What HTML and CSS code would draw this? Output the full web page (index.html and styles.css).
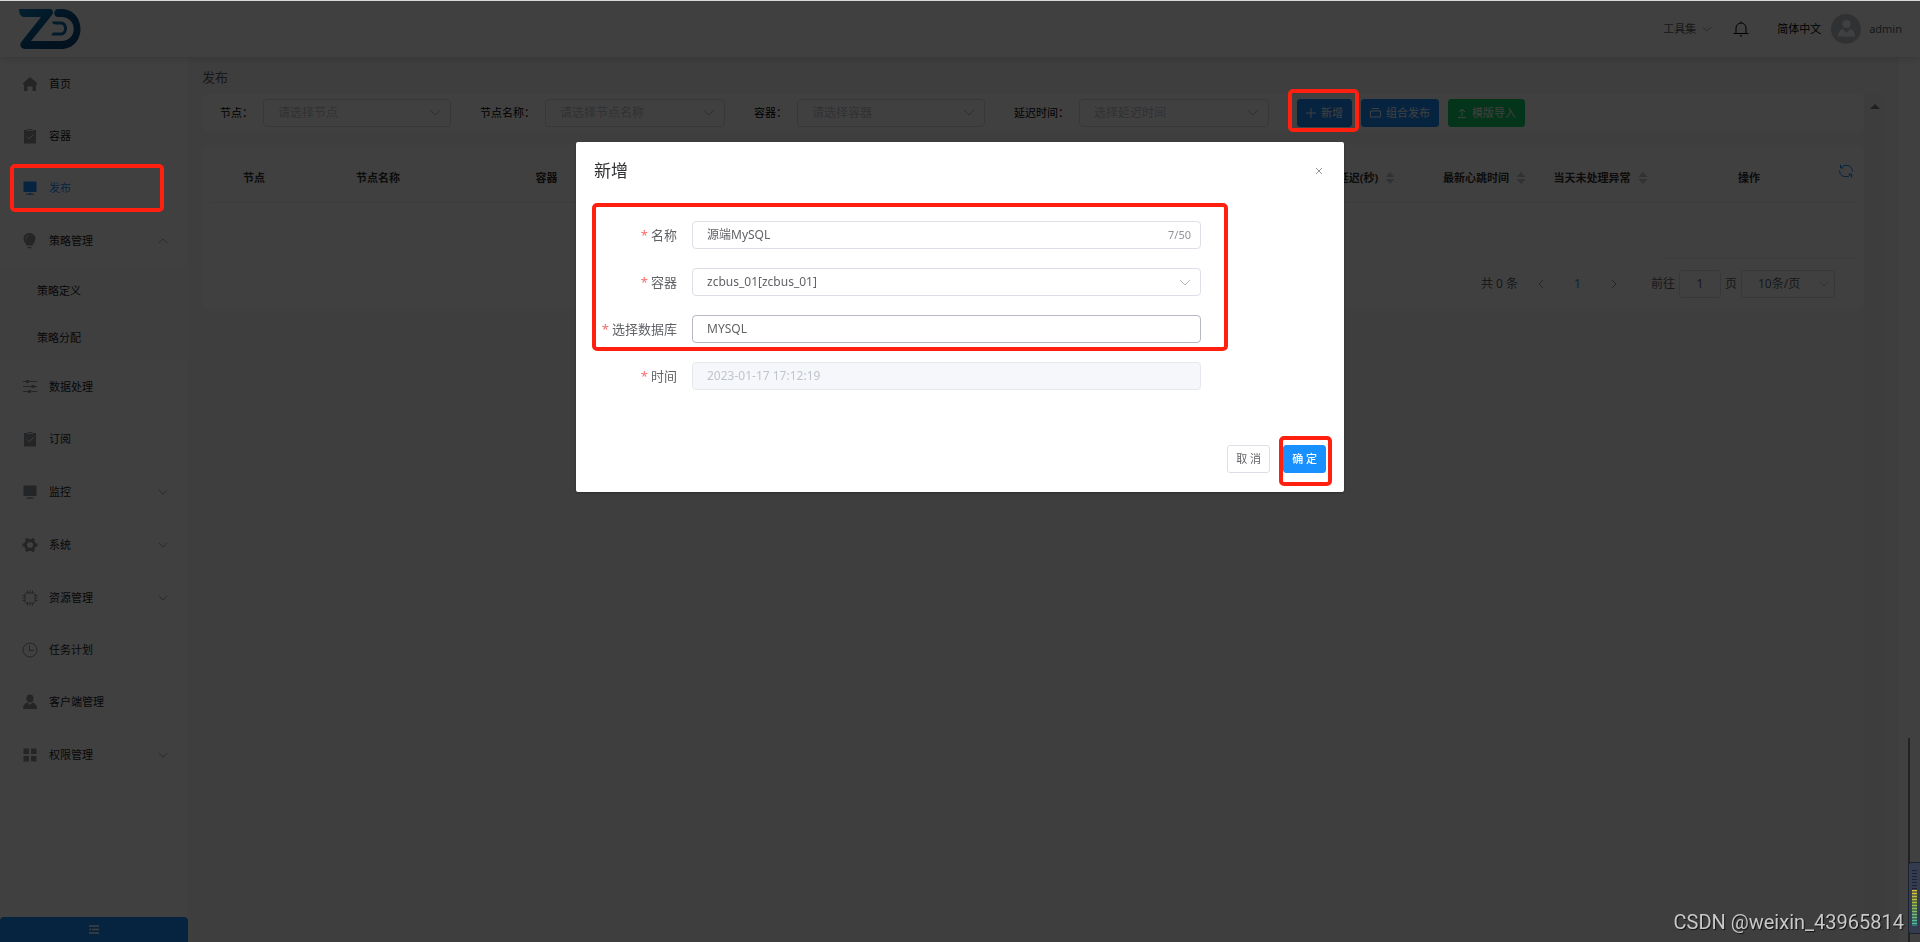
FILE: index.html
```html
<!DOCTYPE html>
<html lang="zh-CN">
<head>
<meta charset="utf-8">
<title>发布</title>
<link rel="stylesheet" href="styles.css">
</head>
<body>
<svg class="defs" aria-hidden="true">
  <symbol id="down" viewBox="0 0 12 7"><path d="M1 1l5 5 5-5" fill="none" stroke="currentColor"/></symbol>
  <symbol id="left" viewBox="0 0 6 10"><path d="M5 1L1 5l4 4" fill="none" stroke="currentColor"/></symbol>
  <symbol id="clip" viewBox="0 0 16 16"><path fill="currentColor" d="M2 2h3v1h6V2h3v13.500H2zM5.500 1h5v1.200h-5z"/><path d="M5 8.500l2.300 2.300L11.500 6.500" fill="none" stroke="#fff"/></symbol>
  <symbol id="screen" viewBox="0 0 16 16"><path fill="currentColor" d="M1.500 1.500h13v10.500h-13zM6.800 13h2.400v.8H12v1H4v-1h2.800z"/></symbol>
  <symbol id="sort" viewBox="0 0 10 12"><path fill="currentColor" d="M5 0l4.500 5h-9zM5 12l4.500-5h-9z"/></symbol>
</svg>

<div class="app">
  <header class="top">
    <a class="logo" href="#" aria-label="ZD">
      <svg viewBox="0 0 62 42" width="62" height="42">
        <defs><linearGradient id="lg" x1="0" y1="0" x2="1" y2="1"><stop offset="0" stop-color="#0d86c4"/><stop offset=".5" stop-color="#08528a"/><stop offset="1" stop-color="#08406e"/></linearGradient></defs>
        <path d="M0 1h31c3 0 4 4 2 6L12 33h30c17 0 17-24 0-24h-3c-5 0-5-8 0-8h3c26 0 26 40 0 40H6c-5 0-6-5-3-8L22 9H5C2 9 0 6 0 1z" fill="url(#lg)"/>
        <path d="M33 13.500h9c4 0 6 3.500 6 7s-2 7-6 7H32.500c0-1.500 1-3 2.500-3h7c2 0 3-2 3-4s-1-4-3-4h-5c-2 0-4-1-4-3z" fill="#0f6aa3"/>
      </svg>
    </a>
    <div class="top-tools">
      <button class="plain tools">工具集 <svg class="chev"><use href="#down"/></svg></button>
      <button class="plain bell" aria-label="通知"><svg viewBox="0 0 16 16" width="16" height="16"><path d="M3 12.500V7a5 5 0 0 1 10 0v5.500M.5 12.500h15M8 2V.5M6.800 14.800h2.400" fill="none" stroke="currentColor"/></svg></button>
      <button class="plain lang">简体中文</button>
      <svg class="avatar" viewBox="0 0 30 30" width="30" height="30"><circle cx="15" cy="15" r="15" fill="#c0c4cc"/><circle cx="15.500" cy="10" r="4" fill="#fff"/><path d="M7 22.500c0-4 2-7 5-7.500l3.500 4 3.500-4c3 .5 5 3.500 5 7.500z" fill="#fff"/></svg>
      <span class="user">admin</span>
    </div>
  </header>

  <div class="body">
    <nav class="side">
      <ul class="menu">
        <li><a href="#"><svg class="ico" viewBox="0 0 16 16"><path fill="currentColor" d="M8 1l7 6v1.500h-1V15h-3.500v-4.500h-5V15H2V8.500H1V7z"/></svg>首页</a></li>
        <li><a href="#"><svg class="ico"><use href="#clip"/></svg>容器</a></li>
        <li><a href="#" class="on"><svg class="ico"><use href="#screen"/></svg>发布</a></li>
        <li><a href="#" class="group"><svg class="ico" viewBox="0 0 16 16"><path fill="currentColor" d="M7.500 0C11 0 13.500 2.500 13.500 5.500S11.500 10 10.500 12.500h-6C3.500 10 1.500 8.500 1.500 5.500S4 0 7.500 0zM5.500 14h4v1.200h-4z"/><path d="M4 6c0-2 1-3 3-3.500" fill="none" stroke="#fff" stroke-width=".8"/></svg>策略管理<svg class="chev up"><use href="#down"/></svg></a>
          <ul class="sub"><li><a href="#">策略定义</a></li><li><a href="#">策略分配</a></li></ul></li>
        <li><a href="#"><svg class="ico" viewBox="0 0 16 16"><path d="M1 2.500h14M1 7.500h14M1 12.500h14" stroke="currentColor"/><path fill="currentColor" d="M4 1h3v3H4zM9.500 6h3v3h-3zM6 11h3v3H6z"/></svg>数据处理</a></li>
        <li><a href="#"><svg class="ico"><use href="#clip"/></svg>订阅</a></li>
        <li><a href="#" class="group"><svg class="ico"><use href="#screen"/></svg>监控<svg class="chev"><use href="#down"/></svg></a></li>
        <li><a href="#" class="group"><svg class="ico" viewBox="0 0 16 16"><circle cx="8" cy="8" r="4.500" fill="none" stroke="currentColor" stroke-width="3"/><path d="M8 8h7.500M8 8H.5M8 8l3.700 6.500M8 8l3.700-6.500M8 8L4.300 1.500M8 8l-3.700 6.500" stroke="currentColor" stroke-width="3"/><circle cx="8" cy="8" r="3" fill="#fff"/></svg>系统<svg class="chev"><use href="#down"/></svg></a></li>
        <li><a href="#" class="group"><svg class="ico" viewBox="0 0 16 16"><rect x="3" y="3" width="10" height="10" rx="1.500" fill="none" stroke="currentColor"/><path d="M5.500 3V.5M8 3V.5M10.500 3V.5M5.500 15.500V13M8 15.500V13M10.500 15.500V13M.5 5.500H3M.5 8H3M.5 10.500H3M13 5.500h2.500M13 8h2.500M13 10.500h2.500" stroke="currentColor"/></svg>资源管理<svg class="chev"><use href="#down"/></svg></a></li>
        <li><a href="#"><svg class="ico" viewBox="0 0 16 16"><circle cx="8" cy="8" r="7" fill="none" stroke="currentColor"/><path d="M7.500 3.500v5H12" fill="none" stroke="currentColor"/></svg>任务计划</a></li>
        <li><a href="#"><svg class="ico" viewBox="0 0 16 16"><ellipse cx="8" cy="4.500" rx="3.600" ry="4" fill="currentColor"/><path fill="currentColor" d="M1 15c0-3.500 1.500-6 4.500-6.500L8 11l2.500-2.500C13.500 9 15 11.500 15 15z"/></svg>客户端管理</a></li>
        <li><a href="#" class="group"><svg class="ico" viewBox="0 0 16 16"><path fill="currentColor" d="M1.500 1.500H7V7H1.500zM9 1.500h5.500V7H9zM1.500 9H7v5.500H1.500zM9 9h5.500v5.500H9z"/></svg>权限管理<svg class="chev"><use href="#down"/></svg></a></li>
      </ul>
      <button class="fold" aria-label="收起菜单"><svg viewBox="0 0 10 9" width="10" height="9"><path d="M0 1h10M3 4.500h7M0 8h10" stroke="#fff" stroke-width="1.500"/><path d="M0 4.500l2-1.500v3z" fill="#fff"/></svg></button>
    </nav>

    <main class="main">
      <h1 class="title">发布</h1>
      <div class="scroll">
        <div class="content">
          <form class="card filters">
            <label for="f1">节点：</label>
            <span class="sel w1"><select id="f1"><option>请选择节点</option></select><svg class="chev"><use href="#down"/></svg></span>
            <label for="f2">节点名称：</label>
            <span class="sel w2"><select id="f2"><option>请选择节点名称</option></select><svg class="chev"><use href="#down"/></svg></span>
            <label for="f3">容器：</label>
            <span class="sel w1"><select id="f3"><option>请选择容器</option></select><svg class="chev"><use href="#down"/></svg></span>
            <label for="f4">延迟时间：</label>
            <span class="sel w1"><select id="f4"><option>选择延迟时间</option></select><svg class="chev"><use href="#down"/></svg></span>
            <div class="acts">
              <button type="button" class="btn blue add"><svg viewBox="0 0 10 10" width="10" height="10"><path d="M5 0v10M0 5h10" stroke="currentColor"/></svg>新增</button>
              <button type="button" class="btn blue"><svg viewBox="0 0 11 11" width="11" height="11"><path d="M.5 4h10v6H.5zM2 1.500h7" fill="none" stroke="currentColor"/></svg>组合发布</button>
              <button type="button" class="btn green"><svg viewBox="0 0 10 10" width="10" height="10"><path d="M5 8V1.500M2 4l3-3 3 3M1 9.500h8" fill="none" stroke="currentColor"/></svg>模版导入</button>
            </div>
          </form>
          <section class="card list">
            <button class="plain refresh" aria-label="刷新"><svg viewBox="0 0 16 16" width="16" height="16"><path d="M2.500 1.500v3.500h3M2.800 4.800A6.500 6.500 0 0 1 14.500 8.500M13.500 14.500V11h-3M13.200 11.200A6.500 6.500 0 0 1 1.500 7.500" fill="none" stroke="currentColor"/></svg></button>
            <table class="grid">
              <colgroup><col class="c1"><col class="c2"><col class="c3"><col><col class="c5"><col class="c6"><col class="c7"><col class="c8"></colgroup>
              <thead><tr><th>节点</th><th>节点名称</th><th>容器</th><td></td>
                <th>延迟(秒)<svg class="sort"><use href="#sort"/></svg></th><th>最新心跳时间<svg class="sort"><use href="#sort"/></svg></th><th>当天未处理异常<svg class="sort"><use href="#sort"/></svg></th><th class="op">操作</th></tr></thead>
              <tbody><tr><td colspan="7"></td><td class="fixed"></td></tr></tbody>
            </table>
            <div class="pager">
              <span>共 0 条</span>
              <button class="plain arrow" aria-label="上一页"><svg width="6" height="10"><use href="#left"/></svg></button>
              <button class="plain cur">1</button>
              <button class="plain arrow next" aria-label="下一页"><svg width="6" height="10"><use href="#left"/></svg></button>
              <label for="pg">前往</label><input id="pg" value="1"><span>页</span>
              <span class="sel size"><select aria-label="每页条数"><option>10条/页</option></select><svg class="chev"><use href="#down"/></svg></span>
            </div>
          </section>
        </div>
        <div class="track"><svg viewBox="0 0 10 5" width="10" height="5"><path d="M0 5l5-5 5 5z" fill="#808080"/></svg></div>
      </div>
    </main>
  </div>
</div>

<div class="mask">
  <form class="dialog" role="dialog" aria-labelledby="dt">
    <div class="dhead"><h2 id="dt">新增</h2><button type="button" class="plain close" aria-label="关闭"><svg viewBox="0 0 8 8" width="8" height="8"><path d="M1 1l6 6M7 1L1 7" stroke="currentColor"/></svg></button></div>
    <div class="fields">
      <label for="n1">名称</label><span class="box"><input id="n1" value="源端MySQL"><small>7/50</small></span>
      <label for="n2">容器</label><span class="sel"><select id="n2"><option>zcbus_01[zcbus_01]</option></select><svg class="chev"><use href="#down"/></svg></span>
      <label for="n3">选择数据库</label><span class="box dark"><input id="n3" value="MYSQL"></span>
      <label for="n4">时间</label><span class="box off"><input id="n4" value="2023-01-17 17:12:19" disabled></span>
    </div>
    <div class="dfoot"><button type="button" class="btn">取 消</button><button type="button" class="btn blue ok">确 定</button></div>
    <i class="mark m-form"></i><i class="mark m-ok"></i>
  </form>
  <i class="mark m-side"></i><i class="mark m-add"></i>
  <div class="edge"></div>
  <div class="meter"><i></i><b></b></div>
  <div class="water">CSDN @weixin_43965814</div>
</div>
</body>
</html>
```
FILE: styles.css
```css
*{box-sizing:border-box}
body,h1,h2,ul{margin:0;padding:0}
ul{list-style:none}
body,button,input,select{font-family:"Noto Sans","Noto Sans CJK SC",sans-serif;font-size:12px;line-height:16px;color:#606266}
.defs{position:absolute;width:0;height:0}
a{color:inherit;text-decoration:none}
svg{flex:none}
.plain{border:0;background:none;padding:0;display:flex;align-items:center}
.chev{width:10px;height:6px;color:#909399}
.up{transform:rotate(180deg)}

.app{height:100vh;display:flex;flex-direction:column;background:#fff;overflow:hidden}
.top{height:57px;display:flex;justify-content:space-between;align-items:center;padding:0 18px 0 19px;box-shadow:0 2px 8px rgba(0,0,0,.12);position:relative;background:#fff}
.logo{display:flex}
.top-tools{display:flex;align-items:center;font-size:11px}
.top-tools .plain{font-size:11px}
.tools{gap:6px}
.bell{margin:0 28px 0 21px;color:#000}
.top-tools .lang{color:#000;margin-right:10px}
.user{margin-left:8px}

.body{flex:1;display:flex;min-height:0}
.side{width:188px;display:flex;flex-direction:column;justify-content:space-between;background:#fff}
.menu{padding-top:1px;font-size:11px;color:#222}
.menu a{display:flex;align-items:center;height:52px;padding:0 20px 0 22px;gap:11px}
.menu a.group{height:53px}
.menu .chev{margin-left:auto}
.ico{width:16px;height:16px;color:#8d9299}
.menu .on,.on .ico{color:#1890ff}
.sub{background:#fcfcfc}
.menu .sub a{height:47px;padding-left:37px}
.fold{height:25px;border:0;background:#1890ff;border-radius:4px 4px 0 0;display:flex;align-items:center;justify-content:center}

.main{flex:1;background:#f6f6f6;display:flex;flex-direction:column;margin-right:21px;padding:11px 14px 0;min-width:0}
.title{font-size:13px;font-weight:400;line-height:18px;margin-bottom:8px}
.scroll{flex:1;display:flex}
.content{flex:1;display:flex;flex-direction:column;gap:14px;min-width:0}
.card{background:#fff;border-radius:6px}
.track{width:21px;background:#f2f2f2;display:flex;justify-content:center;padding-top:10px}
.filters{display:flex;align-items:center;padding:4px 18px;height:37px}
.filters label{font-size:11px;color:#000;white-space:nowrap}
.sel{display:grid;align-items:center}
.sel select{grid-area:1/1;appearance:none;width:100%;height:28px;padding:0 14px;border:1px solid #dcdfe6;border-radius:4px;background:transparent}
.sel .chev{grid-area:1/1;justify-self:end;margin-right:10px;width:12px;height:7px;color:#b4b8c2}
.filters select{color:#c0c4cc}
.filters label{flex:none;margin-right:10px}
.filters .sel{flex:0 1 188px;margin-right:29px}
.filters .w2{flex-basis:180px}
.filters .sel:last-of-type{flex-basis:190px;margin-right:22px}
.acts{display:flex;gap:9px;margin-left:auto;margin-right:321px}
.btn{height:28px;font-size:11px;border:1px solid #dcdfe6;border-radius:3px;background:#fff;padding:0 8px;display:flex;align-items:center;gap:5px;white-space:nowrap}
.blue{background:#1890ff;border-color:#1890ff;color:#fff}
.ok{font-weight:500}
.green{background:#13ce66;border-color:#13ce66;color:#fff}
.list{padding:9px;position:relative}
.refresh{position:absolute;right:10px;top:18px;color:#1890ff}
.grid{width:100%;border-collapse:collapse;table-layout:fixed}
.grid th{font-size:11px;color:#333;padding:0;white-space:nowrap}
.grid tr{height:48px}
.grid thead tr{border-bottom:1px solid #ebeef5}
.grid tbody tr{height:56px}
.fixed{border-bottom:1px solid #ebeef5}
.c1{width:86px}.c2{width:162px}.c3{width:175px}.c5{width:122px}.c6{width:114px}.c7{width:118px}.c8{width:192px}
.grid .op{padding-right:20px}
.sort{width:10px;height:12px;margin:0 7px;color:#c0c4cc;vertical-align:-2px}
.pager{display:flex;align-items:center;justify-content:flex-end;padding:11px 20px 2px 0}
.arrow{margin-left:20px;color:#909399}
.cur{margin:0 8px 0 30px;color:#1890ff}
.next{transform:rotate(180deg);margin:0 34px 0 22px}
.pager input{width:42px;height:28px;border:1px solid #dcdfe6;border-radius:4px;text-align:center;margin:0 4px;background:none}
.size{width:94px;margin-left:4px}
.size select{padding-left:16px}
.sel.size .chev{margin-right:6px;width:10px;height:6px}

.mask{position:fixed;inset:0;background:rgba(0,0,0,.75);border-top:1px solid #d5d9d8;display:flex;justify-content:center;align-items:flex-start;padding-top:15vh}
.dialog{position:relative;width:40%;background:#fff;border-radius:2px;box-shadow:0 1px 3px rgba(0,0,0,.3);padding:18px 18px 19px}
.dhead{display:flex;justify-content:space-between;align-items:center}
.dhead h2{font-size:17px;line-height:22px;font-weight:400;color:#303133}
.close{color:#909399;padding-right:3px}
.fields{display:grid;grid-template-columns:83px 1fr;column-gap:15px;row-gap:19px;align-items:center;padding:39px 125px 0 0}
.fields label{font-size:13px;text-align:right;white-space:nowrap;justify-self:end}
.fields label::before{content:"*";color:#f56c6c;margin-right:3px}
.box{display:flex;align-items:center;height:28px;border:1px solid #dcdfe6;border-radius:4px;padding:0 9px 0 14px}
.box input{flex:1;min-width:0;border:0;padding:0;background:none;outline:0}
.box small{font-size:11px;color:#909399}
.dark{border-color:#b4b8c2}
.off{background:#f5f7fa;border-color:#e4e7ed}
.off input{color:#c0c4cc}
.dfoot{display:flex;justify-content:flex-end;gap:13px;padding-top:55px}
.dfoot .btn{padding:0 8px}

.mark{position:absolute;border:4px solid #ff2010;border-radius:5px;pointer-events:none}
.m-form{left:16px;top:61px;width:636px;height:148px}
.m-ok{right:12px;bottom:6px;width:53px;height:50px}
.m-side{left:10px;top:163px;width:154px;height:48px}
.m-add{left:1288px;top:88px;width:71px;height:43px}
.edge{position:absolute;right:10px;bottom:0;width:2px;height:204px;background:#222}
.meter{position:absolute;right:0;bottom:8px;width:12px;height:72px;background:#353c4f;border:1px solid #1d2230;border-right:0;border-radius:3px 0 0 3px;padding:7px 3px;display:flex;flex-direction:column}
.meter i{height:20px;background:repeating-linear-gradient(#1c2130 0 1px,#353c4f 1px 3px)}
.meter b{flex:1;background:repeating-linear-gradient(transparent 0 1px,#353c4f99 1px 3px),linear-gradient(#e8c22c,#a4c43c 35%,#3fc0a8)}
.water{position:absolute;right:16px;bottom:8px;font:20px/24px Roboto,sans-serif;color:#c8c8c8;text-shadow:1px 1px 1px #111}
```
